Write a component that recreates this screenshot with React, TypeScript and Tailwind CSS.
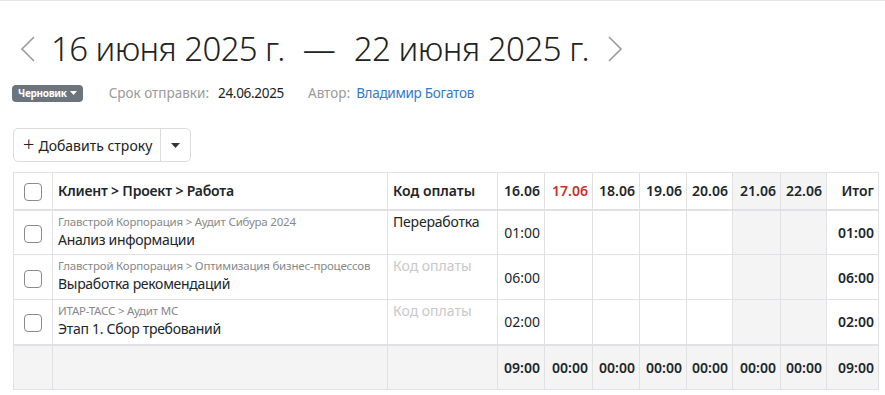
import React from "react";

const days = ["16.06", "17.06", "18.06", "19.06", "20.06", "21.06", "22.06"];
const widths = ["w-[47px]", "w-[48px]", "w-[47px]", "w-[47px]", "w-[46px]", "w-[48px]", "w-[46px]"];

const rows = [
  { path: "Главстрой Корпорация > Аудит Сибура 2024", name: "Анализ информации", code: "Переработка", v: "01:00" },
  { path: "Главстрой Корпорация > Оптимизация бизнес-процессов", name: "Выработка рекомендаций", code: "", v: "06:00" },
  { path: "ИТАР-ТАСС > Аудит МС", name: "Этап 1. Сбор требований", code: "", v: "02:00" },
];

function Box() {
  return <span className="inline-block w-[18px] h-[18px] rounded-[4px] border border-[#8a8a8a] bg-white align-middle" />;
}

function Chevron({ dir }: { dir: "l" | "r" }) {
  return (
    <svg width="16" height="26" viewBox="0 0 16 26" className="shrink-0">
      <path d={dir === "l" ? "M14 1 L2 13 L14 25" : "M2 1 L14 13 L2 25"} fill="none" stroke="#9a9a9a" strokeWidth="1.6" />
    </svg>
  );
}

export default function App() {
  const cell = "border border-[#dfe1e4]";
  return (
    <div className="w-[885px] h-[395px] bg-white border-t border-[#e6e6e6] text-[#212529] overflow-hidden" style={{ fontFamily: '"Noto Sans", "Open Sans", sans-serif' }}>
      <div className="flex items-center h-[29px] mt-[33px] pl-[20px]">
        <Chevron dir="l" />
        <span className="ml-[15px] text-[33px] font-light tracking-[-0.6px] leading-none text-[#222] whitespace-nowrap">16 июня 2025 г.</span>
        <span className="mx-[18px] text-[33px] font-light leading-none text-[#222]">—</span>
        <span className="text-[33px] font-light tracking-[-0.5px] leading-none text-[#222] whitespace-nowrap">22 июня 2025 г.</span>
        <span className="ml-[18px]"><Chevron dir="r" /></span>
      </div>
      <div className="flex items-center mt-[21px] pl-[12px] text-[13.5px] h-[18px]">
        <span className="flex items-center h-[17px] px-[6px] rounded-[4px] bg-[#6c757d] text-white text-[10px] font-bold tracking-[-0.3px]">
          Черновик
          <svg width="7" height="4" viewBox="0 0 7 4" className="ml-[3px]"><path d="M0 0 L7 0 L3.5 4 Z" fill="#fff" /></svg>
        </span>
        <span className="ml-[26px] text-[#9a9a9a]">Срок отправки:</span>
        <span className="ml-[9px] text-[#222] tracking-[-0.3px]">24.06.2025</span>
        <span className="ml-[24px] text-[#9a9a9a]">Автор:</span>
        <span className="ml-[6px] text-[#2f7bc4] tracking-[-0.3px]">Владимир Богатов</span>
      </div>
      <div className="flex mt-[26px] ml-[13px] w-[178px] h-[34px] border border-[#dcdcdc] rounded-[5px] text-[14px] text-[#222]">
        <span className="flex items-center pl-[9px] w-[147px] border-r border-[#dcdcdc]">
          <span className="text-[20px] font-light leading-none mr-[4px] -mt-[2px]">+</span>Добавить строку
        </span>
        <span className="flex-1 flex items-center justify-center">
          <svg width="9" height="5" viewBox="0 0 9 5"><path d="M0 0 L9 0 L4.5 5 Z" fill="#333" /></svg>
        </span>
      </div>
      <table className="mt-[10px] ml-[13px] border-collapse table-fixed w-[865px] text-[14px]">
        <colgroup>
          <col className="w-[39px]" />
          <col className="w-[335px]" />
          <col className="w-[110px]" />
          {widths.map((w, i) => <col key={i} className={w} />)}
          <col className="w-[52px]" />
        </colgroup>
        <thead>
          <tr className="h-[37px] font-semibold border-b-2 border-[#dfe1e4]">
            <th className={`${cell} text-center`}><Box /></th>
            <th className={`${cell} text-left px-[5px] font-semibold tracking-[-0.2px]`}>Клиент &gt; Проект &gt; Работа</th>
            <th className={`${cell} text-left px-[5px] font-semibold`}>Код оплаты</th>
            {days.map((d, i) => (
              <th key={d} className={`${cell} text-right px-[4px] font-semibold ${i === 1 ? "text-[#c9302c] font-normal" : ""} ${i >= 5 ? "bg-[#f4f4f4]" : ""}`}>{d}</th>
            ))}
            <th className={`${cell} text-right px-[4px] font-semibold`}>Итог</th>
          </tr>
        </thead>
        <tbody>
          {rows.map((r) => (
            <tr key={r.name} className="h-[45px]">
              <td className={`${cell} px-[5px] text-center`}><Box /></td>
              <td className={`${cell} px-[5px] align-top pt-[2px]`}>
                <div className="text-[11.5px] text-[#888] leading-[17px] whitespace-nowrap tracking-[-0.2px]">{r.path}</div>
                <div className="text-[14px] leading-[19px] whitespace-nowrap tracking-[-0.3px]">{r.name}</div>
              </td>
              <td className={`${cell} px-[5px] align-top pt-[0px]`}>
                {r.code ? <span className="tracking-[-0.2px]">{r.code}</span> : <span className="text-[#c8c8c8]">Код оплаты</span>}
              </td>
              {days.map((d, i) => (
                <td key={d} className={`${cell} text-right px-[4px] ${i >= 5 ? "bg-[#f4f4f4]" : ""}`}>{i === 0 ? r.v : ""}</td>
              ))}
              <td className={`${cell} text-right px-[4px] font-semibold`}>{r.v}</td>
            </tr>
          ))}
          <tr className="h-[45px] bg-[#f4f4f4] font-semibold border-t-2 border-[#dfe1e4]">
            <td className={cell}></td>
            <td className={cell}></td>
            <td className={cell}></td>
            {days.map((d, i) => (
              <td key={d} className={`${cell} text-right px-[4px]`}>{i === 0 ? "09:00" : "00:00"}</td>
            ))}
            <td className={`${cell} text-right px-[4px]`}>09:00</td>
          </tr>
        </tbody>
      </table>
    </div>
  );
}
